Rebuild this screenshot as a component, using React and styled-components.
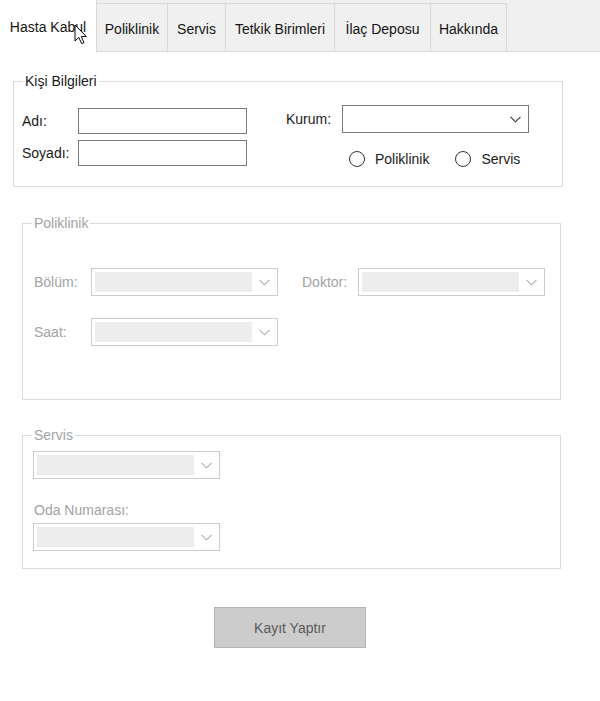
import React from 'react';
import styled, { createGlobalStyle } from 'styled-components';

const GlobalStyle = createGlobalStyle`
	html, body {
		margin: 0;
		padding: 0;
		background: #ffffff;
	}
	body {
		font-family: "Liberation Sans", Arial, sans-serif;
		font-size: 14px;
		color: #1a1a1a;
	}
`;

const tabs = [
	{ label: 'Hasta Kabul', w: 97 },
	{ label: 'Poliklinik', w: 71 },
	{ label: 'Servis', w: 58 },
	{ label: 'Tetkik Birimleri', w: 109 },
	{ label: 'İlaç Deposu', w: 96 },
	{ label: 'Hakkında', w: 76 },
];

const Chevron = ({ color }) => (
	<svg width="11" height="7" viewBox="0 0 11 7">
		<polyline points="0.5,0.8 5.5,5.8 10.5,0.8" fill="none" stroke={color} strokeWidth="1.1" />
	</svg>
);

const ComboBox = ({ disabled, width = 187 }) => (
	<Combo $disabled={disabled} $w={width}>
		<ComboFill $disabled={disabled} />
		<ArrowBox>
			<Chevron color={disabled ? '#b0b0b0' : '#333333'} />
		</ArrowBox>
	</Combo>
);

export default function App() {
	return (
		<Window>
			<GlobalStyle />
			<TabStrip>
				{tabs.map((t, i) => (
					<Tab key={t.label} $active={i === 0} $w={t.w}>
						{t.label}
					</Tab>
				))}
			</TabStrip>
			<Cursor width="14" height="21" viewBox="0 0 14 21">
				<path d="M1 1 L1 17 L4.8 13.4 L7.6 19.6 L10 18.6 L7.3 12.5 L12.3 12.5 Z" fill="#ffffff" stroke="#000000" strokeWidth="1" strokeLinejoin="round" />
			</Cursor>

			<Panel>
				<GroupBox $ml={13} $mt={21} $w={550}>
					<Legend>Kişi Bilgileri</Legend>
					<GroupBody $p="16px 0 19px 8px">
						<PersonLayout>
							<LeftColumn>
								<FieldRow>
									<Label $w={56}>Adı:</Label>
									<TextBox />
								</FieldRow>
								<FieldRow>
									<Label $w={56}>Soyadı:</Label>
									<TextBox />
								</FieldRow>
							</LeftColumn>
							<RightColumn>
								<FieldRow>
									<Label $w={56}>Kurum:</Label>
									<ComboBox />
								</FieldRow>
								<RadioRow>
									<RadioItem>
										<RadioCircle />
										Poliklinik
									</RadioItem>
									<RadioItem>
										<RadioCircle />
										Servis
									</RadioItem>
								</RadioRow>
							</RightColumn>
						</PersonLayout>
					</GroupBody>
				</GroupBox>

				<GroupBox $ml={22} $mt={28} $w={539}>
					<Legend $disabled>Poliklinik</Legend>
					<GroupBody $p="37px 0 53px 11px">
						<DisabledRows>
							<FieldRow>
								<Label $w={57} $disabled>Bölüm:</Label>
								<ComboBox disabled />
								<Label $w={56} $disabled $ml={24}>Doktor:</Label>
								<ComboBox disabled />
							</FieldRow>
							<FieldRow>
								<Label $w={57} $disabled>Saat:</Label>
								<ComboBox disabled />
							</FieldRow>
						</DisabledRows>
					</GroupBody>
				</GroupBox>

				<GroupBox $ml={22} $mt={27} $w={539}>
					<Legend $disabled>Servis</Legend>
					<GroupBody $p="8px 0 17px 10px">
						<ComboBox disabled />
						<StackLabel>Oda Numarası:</StackLabel>
						<ComboBox disabled />
					</GroupBody>
				</GroupBox>

				<SubmitButton disabled>Kayıt Yaptır</SubmitButton>
			</Panel>
		</Window>
	);
}

const Window = styled.div`
	position: relative;
	width: 600px;
	height: 701px;
	overflow: hidden;
	background: #ffffff;
`;

const TabStrip = styled.div`
	display: flex;
	align-items: flex-end;
	height: 52px;
	box-sizing: border-box;
	background: #f0f0f0;
	border-bottom: 1px solid #dadada;
`;

const Tab = styled.div`
	display: flex;
	align-items: center;
	justify-content: center;
	box-sizing: border-box;
	width: ${p => p.$w}px;
	height: ${p => (p.$active ? 53 : 48)}px;
	margin-bottom: ${p => (p.$active ? -1 : 0)}px;
	padding-top: ${p => (p.$active ? 1 : 3)}px;
	background: ${p => (p.$active ? '#ffffff' : '#f0f0f0')};
	border-top: 1px solid ${p => (p.$active ? '#ffffff' : '#d9d9d9')};
	border-right: 1px solid #d9d9d9;
	color: #141414;
	white-space: nowrap;
	position: relative;
	z-index: ${p => (p.$active ? 1 : 0)};
`;

const Cursor = styled.svg`
	position: absolute;
	left: 74px;
	top: 24px;
	z-index: 2;
`;

const Panel = styled.div`
	display: flex;
	flex-direction: column;
	align-items: flex-start;
`;

const GroupBox = styled.fieldset`
	box-sizing: border-box;
	width: ${p => p.$w}px;
	min-width: 0;
	margin: ${p => p.$mt}px 0 0 ${p => p.$ml}px;
	padding: 0;
	border: 1px solid #dcdcdc;
`;

const Legend = styled.legend`
	margin-left: 9px;
	padding: 0 2px;
	line-height: 16px;
	color: ${p => (p.$disabled ? '#a3a3a3' : '#1a1a1a')};
`;

const GroupBody = styled.div`
	padding: ${p => p.$p};
`;

const PersonLayout = styled.div`
	display: flex;
	gap: 39px;
`;

const LeftColumn = styled.div`
	display: flex;
	flex-direction: column;
	gap: 6px;
	padding-top: 3px;
`;

const RightColumn = styled.div`
	display: flex;
	flex-direction: column;
`;

const FieldRow = styled.div`
	display: flex;
	align-items: center;
`;

const DisabledRows = styled.div`
	display: flex;
	flex-direction: column;
	gap: 22px;
`;

const Label = styled.span`
	width: ${p => p.$w}px;
	margin-left: ${p => p.$ml || 0}px;
	line-height: 16px;
	white-space: nowrap;
	color: ${p => (p.$disabled ? '#a3a3a3' : '#1a1a1a')};
`;

const StackLabel = styled.div`
	margin: 23px 0 5px 1px;
	line-height: 16px;
	color: #a3a3a3;
`;

const TextBox = styled.div`
	box-sizing: border-box;
	width: 169px;
	height: 26px;
	border: 1px solid #7a7a7a;
	background: #ffffff;
`;

const Combo = styled.div`
	display: flex;
	box-sizing: border-box;
	width: ${p => p.$w}px;
	height: 28px;
	border: 1px solid ${p => (p.$disabled ? '#cccccc' : '#7a7a7a')};
	background: #ffffff;
`;

const ComboFill = styled.div`
	flex: 1;
	margin: 3px 0 3px 3px;
	background: ${p => (p.$disabled ? '#ededed' : '#ffffff')};
`;

const ArrowBox = styled.div`
	display: flex;
	align-items: center;
	justify-content: center;
	width: 25px;
	padding-top: 1px;
`;

const RadioRow = styled.div`
	display: flex;
	align-items: center;
	gap: 26px;
	height: 16px;
	margin-top: 18px;
	padding-left: 63px;
`;

const RadioItem = styled.label`
	display: flex;
	align-items: center;
	gap: 10px;
	line-height: 16px;
	color: #1a1a1a;
`;

const RadioCircle = styled.span`
	box-sizing: border-box;
	width: 16px;
	height: 16px;
	border-radius: 50%;
	border: 1px solid #333333;
	background: #ffffff;
`;

const SubmitButton = styled.button`
	box-sizing: border-box;
	width: 152px;
	height: 41px;
	margin: 38px 0 0 214px;
	padding: 0;
	border: 1px solid #b5b5b5;
	background: #cccccc;
	color: #5a5a5a;
	font-family: "Liberation Sans", Arial, sans-serif;
	font-size: 14px;
`;
